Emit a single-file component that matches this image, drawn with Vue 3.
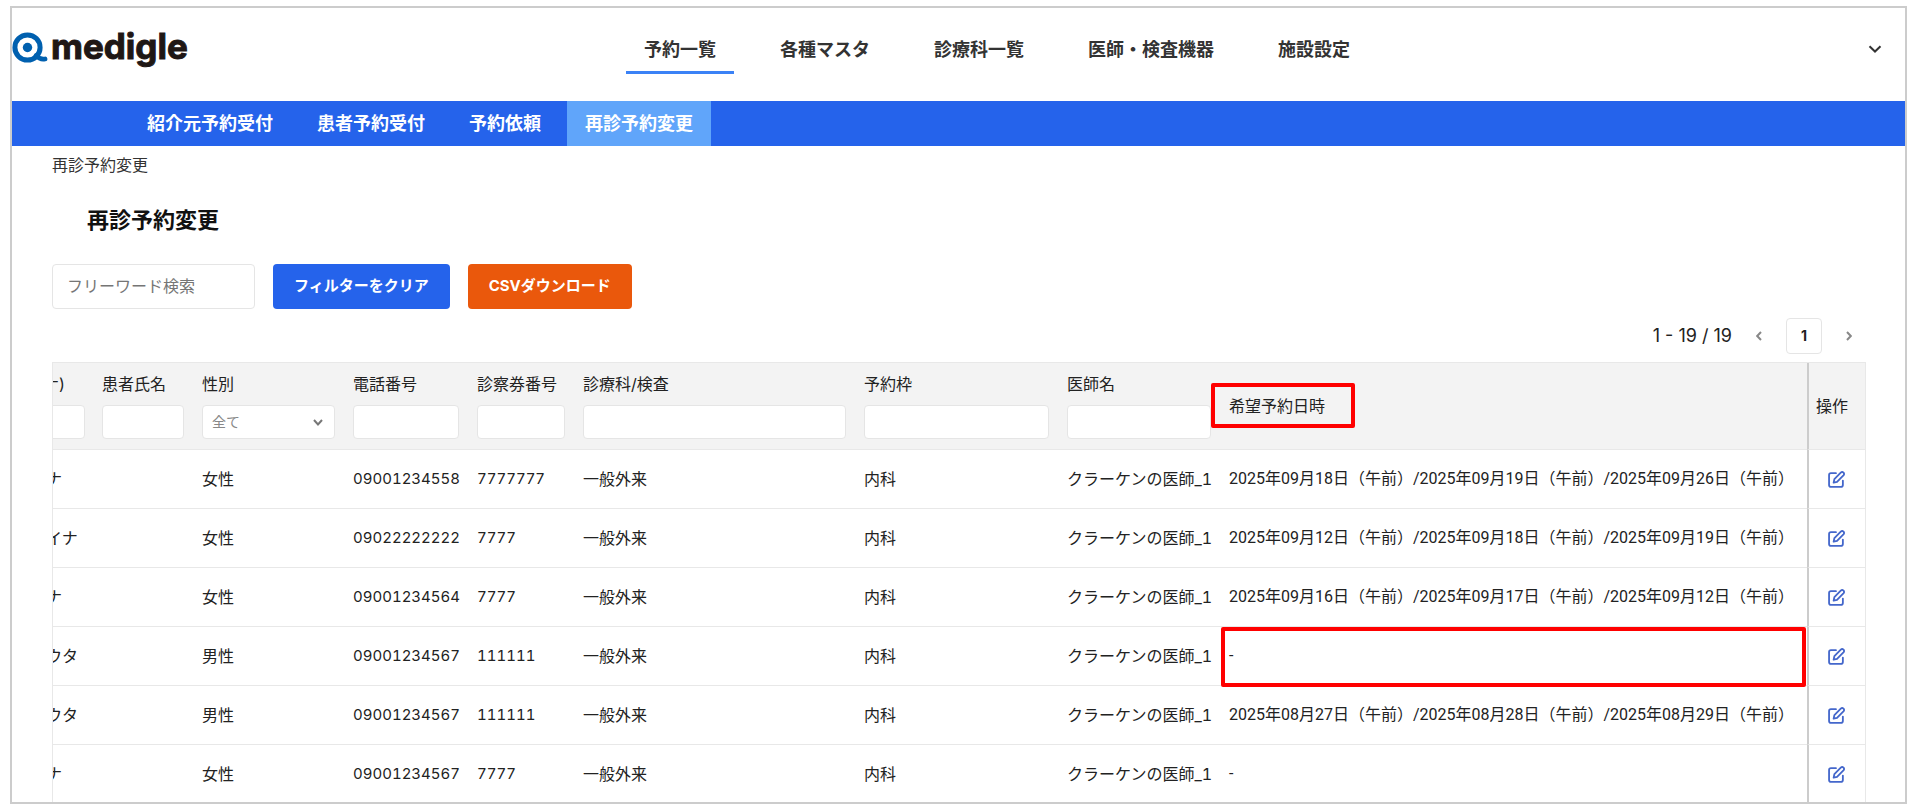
<script setup>
const mainNav = ['予約一覧', '各種マスタ', '診療科一覧', '医師・検査機器', '施設設定']
const subNav = ['紹介元予約受付', '患者予約受付', '予約依頼', '再診予約変更']
const filters = [
  { key: 'name', label: '患者氏名', type: 'text' },
  { key: 'sex', label: '性別', type: 'select' },
  { key: 'tel', label: '電話番号', type: 'text' },
  { key: 'card', label: '診察券番号', type: 'text' },
  { key: 'dept', label: '診療科/検査', type: 'text' },
  { key: 'slot', label: '予約枠', type: 'text' },
  { key: 'doctor', label: '医師名', type: 'text' },
]
const base = { dept: '一般外来', slot: '内科', doctor: 'クラーケンの医師_1' }
const rows = [
  { ...base, kana: 'ナ', sex: '女性', tel: '09001234558', card: '7777777', dates: '2025年09月18日（午前）/2025年09月19日（午前）/2025年09月26日（午前）' },
  { ...base, kana: 'イナ', sex: '女性', tel: '09022222222', card: '7777', dates: '2025年09月12日（午前）/2025年09月18日（午前）/2025年09月19日（午前）' },
  { ...base, kana: 'ナ', sex: '女性', tel: '09001234564', card: '7777', dates: '2025年09月16日（午前）/2025年09月17日（午前）/2025年09月12日（午前）' },
  { ...base, kana: 'ウタ', sex: '男性', tel: '09001234567', card: '111111', dates: '-', marked: true },
  { ...base, kana: 'ウタ', sex: '男性', tel: '09001234567', card: '111111', dates: '2025年08月27日（午前）/2025年08月28日（午前）/2025年08月29日（午前）' },
  { ...base, kana: 'ナ', sex: '女性', tel: '09001234567', card: '7777', dates: '-' },
]
</script>

<template>
  <div class="window">
    <header class="header">
      <a class="logo" href="#" aria-label="medigle">
        <svg class="mark" viewBox="0 0 36 31" aria-hidden="true">
          <circle cx="15.500" cy="15.500" r="12.600" fill="none" stroke="#0060af" stroke-width="5" />
          <circle cx="15.500" cy="15.500" r="4.700" fill="#0060af" />
          <path d="M24 23.500 Q28 28 33 27" fill="none" stroke="#0060af" stroke-width="4.800" stroke-linecap="round" />
        </svg>
        <span class="wordmark">medigle</span>
      </a>
      <nav class="main-nav">
        <a v-for="(n, i) in mainNav" :key="n" href="#" :class="{ active: i === 0 }">{{ n }}</a>
      </nav>
      <button class="account" type="button" aria-label="アカウント">
        <svg viewBox="0 0 14 8"><path d="M1.500 1.200 L7 6.500 L12.500 1.200" /></svg>
      </button>
    </header>

    <nav class="sub-nav">
      <a v-for="(n, i) in subNav" :key="n" href="#" :class="{ active: i === 3 }">{{ n }}</a>
    </nav>

    <main class="main">
      <p class="crumb">再診予約変更</p>
      <h1>再診予約変更</h1>
      <div class="tools">
        <input class="search" type="text" placeholder="フリーワード検索" aria-label="フリーワード検索" />
        <button class="btn blue" type="button">フィルターをクリア</button>
        <button class="btn orange" type="button">CSVダウンロード</button>
      </div>
      <div class="pager">
        <span class="range">1 - 19 / 19</span>
        <button class="arrow" type="button" aria-label="前へ"><svg viewBox="0 0 6 10"><path d="M5 1 L1.200 5 L5 9" /></svg></button>
        <button class="page" type="button">1</button>
        <button class="arrow" type="button" aria-label="次へ"><svg viewBox="0 0 6 10"><path d="M1 1 L4.800 5 L1 9" /></svg></button>
      </div>

      <table class="grid">
        <colgroup>
          <col class="c-kana" /><col class="c-name" /><col class="c-sex" /><col class="c-tel" /><col class="c-card" />
          <col class="c-dept" /><col class="c-slot" /><col class="c-doctor" /><col /><col class="c-op" />
        </colgroup>
        <thead>
          <tr>
            <th class="cut">
              <label for="f-kana">ナ)</label>
              <input id="f-kana" type="text" />
            </th>
            <th v-for="f in filters" :key="f.key">
              <label :for="'f-' + f.key">{{ f.label }}</label>
              <span v-if="f.type === 'select'" class="select">
                <select :id="'f-' + f.key"><option>全て</option></select>
                <svg viewBox="0 0 10 7"><path d="M1 1 L5 5.500 L9 1" /></svg>
              </span>
              <input v-else :id="'f-' + f.key" type="text" />
            </th>
            <th class="wish">希望予約日時<span class="mark-head"></span></th>
            <th class="op">操作</th>
          </tr>
        </thead>
        <tbody>
          <tr v-for="(r, i) in rows" :key="i">
            <td class="cut">{{ r.kana }}</td>
            <td></td>
            <td>{{ r.sex }}</td>
            <td class="num">{{ r.tel }}</td>
            <td class="num">{{ r.card }}</td>
            <td>{{ r.dept }}</td>
            <td>{{ r.slot }}</td>
            <td class="doctor">{{ r.doctor }}</td>
            <td class="wish">{{ r.dates }}<span v-if="r.marked" class="mark-cell"></span></td>
            <td class="op">
              <button type="button" aria-label="編集">
                <svg viewBox="0 0 16 16">
                  <path d="M7.500 2 H2.800 Q1 2 1 3.800 V13.200 Q1 15 2.800 15 H12.200 Q14 15 14 13.200 V9" />
                  <path d="M12 1.600 Q13.300 0.400 14.600 1.500 Q15.700 2.800 14.500 4.100 L8.500 10.200 L5.300 11 L6 7.700 Z" />
                </svg>
              </button>
            </td>
          </tr>
        </tbody>
      </table>
    </main>
  </div>
</template>

<style>
body { background: #fff; }
</style>

<style scoped>
* { box-sizing: border-box; }
.window {
  height: calc(100vh - 10px);
  margin: 6px 13px 4px 10px;
  border: 2px solid #ccc;
  overflow: hidden;
  color: #222;
  background: #fff;
  font: 16px/24px Inter, "Noto Sans CJK JP", sans-serif;
}
button, input, select { font: inherit; color: inherit; margin: 0; }
button { cursor: pointer; }
a { color: inherit; text-decoration: none; }
.header {
  display: grid;
  grid-template-columns: 614px 1fr auto;
  align-items: start;
  height: 93px;
}
.logo { display: flex; align-items: flex-start; gap: 3px; padding-top: 24px; }
.mark { width: 36px; height: 31px; }
.wordmark {
  font-size: 35px;
  line-height: 28px;
  font-weight: 700;
  color: #1f1715;
  -webkit-text-stroke: 1px #1f1715;
}
.main-nav { display: flex; gap: 28px; padding-top: 23px; }
.main-nav a {
  padding: 7px 18px 9px;
  border-bottom: 3px solid transparent;
  font-size: 18px;
  line-height: 24px;
  font-weight: 700;
  white-space: nowrap;
  color: #333;
}
.main-nav a.active { border-bottom-color: #3b82f6; }
.account { margin: 34px 23px 0 0; padding: 0; border: 0; background: none; line-height: 0; }
.account svg { width: 14px; height: 14px; fill: none; stroke: #333; stroke-width: 2; }
.sub-nav { display: flex; gap: 8px; height: 45px; padding-left: 117px; background: #2563eb; }
.sub-nav a { padding: 0 18px; font-size: 18px; line-height: 46px; font-weight: 700; color: #fff; white-space: nowrap; }
.sub-nav a.active { background: #60a5fa; }
.main { padding: 7px 39px 0 40px; }
.crumb { margin: 0; color: #333; }
h1 { margin: 27px 0 0 35px; font-size: 22px; line-height: 32px; font-weight: 700; color: #111; }
.tools { display: flex; gap: 18px; margin-top: 28px; }
.search { width: 203px; height: 45px; padding: 0 14px 2px; border: 1px solid #e5e5e5; border-radius: 4px; }
.search::placeholder { color: #757575; opacity: 1; }
.btn { height: 45px; padding: 0 21px 2px; border: 0; border-radius: 4px; color: #fff; font-size: 15px; font-weight: 700; white-space: nowrap; }
.blue { background: #2563eb; }
.orange { background: #ea580c; }
.pager { display: flex; align-items: center; justify-content: flex-end; height: 36px; margin: 9px 0 8px; }
.range { font-size: 18px; margin-right: 10px; }
.arrow { width: 34px; height: 36px; padding: 0; border: 0; background: none; line-height: 0; }
.arrow svg { width: 6px; height: 10px; fill: none; stroke: #888; stroke-width: 2; }
.page { width: 36px; height: 36px; margin: 0 10px; padding: 0; border: 1px solid #e5e5e5; border-radius: 4px; background: #fff; font-size: 14px; font-weight: 700; }
.grid { width: 100%; table-layout: fixed; border-collapse: separate; border-spacing: 0; border-top: 1px solid #e8e8e8; }
.c-kana { width: 41px; }
.c-name { width: 100px; }
.c-sex { width: 151px; }
.c-tel { width: 124px; }
.c-card { width: 106px; }
.c-dept { width: 281px; }
.c-slot { width: 203px; }
.c-doctor { width: 162px; }
.c-op { width: 59px; }
th, td { height: 59px; padding: 0 9px; border-bottom: 1px solid #e8e8e8; text-align: left; font-weight: 400; white-space: nowrap; vertical-align: middle; }
thead th { height: 87px; background: #f3f3f3; }
th label { display: block; margin-bottom: 9px; }
th input, th select { display: block; width: 100%; height: 34px; padding: 0 9px; border: 1px solid #e5e5e5; border-radius: 4px; background: #fff; }
thead th:not(.wish):not(.op) { padding-bottom: 2px; }
.select { display: block; position: relative; }
.select select { appearance: none; font-size: 14px; color: #888; }
.select svg { position: absolute; right: 12px; top: 14px; width: 10px; height: 7px; fill: none; stroke: #777; stroke-width: 2; pointer-events: none; }
.cut { padding-left: 0; overflow: hidden; border-left: 1px solid #e8e8e8; text-indent: -7px; }
th.cut { text-indent: -10px; }
.cut input { width: 61px; margin-left: -29px; }
.num { font-size: 15px; font-feature-settings: "tnum"; }
.doctor { font-feature-settings: "tnum"; }
.wish { position: relative; }
td.wish { font-family: Roboto, "Noto Sans CJK JP", sans-serif; }
.mark-head, .mark-cell { position: absolute; border: 4px solid #f00; border-radius: 2px; pointer-events: none; }
.mark-head { left: -9px; top: 20px; width: 144px; height: 45px; z-index: 1; }
.mark-cell { left: 1px; right: 1px; top: 0; bottom: -2px; z-index: 1; }
.op { border-left: 2px solid #ccc; border-right: 1px solid #e8e8e8; }
th.op { padding: 0 7px; }
td.op { padding: 0 0 0 19px; }
.op button { display: block; padding: 0; border: 0; background: none; }
.op svg { display: block; width: 17px; height: 17px; fill: none; stroke: #4467cb; stroke-width: 1.7; stroke-linejoin: round; stroke-linecap: round; }
</style>
